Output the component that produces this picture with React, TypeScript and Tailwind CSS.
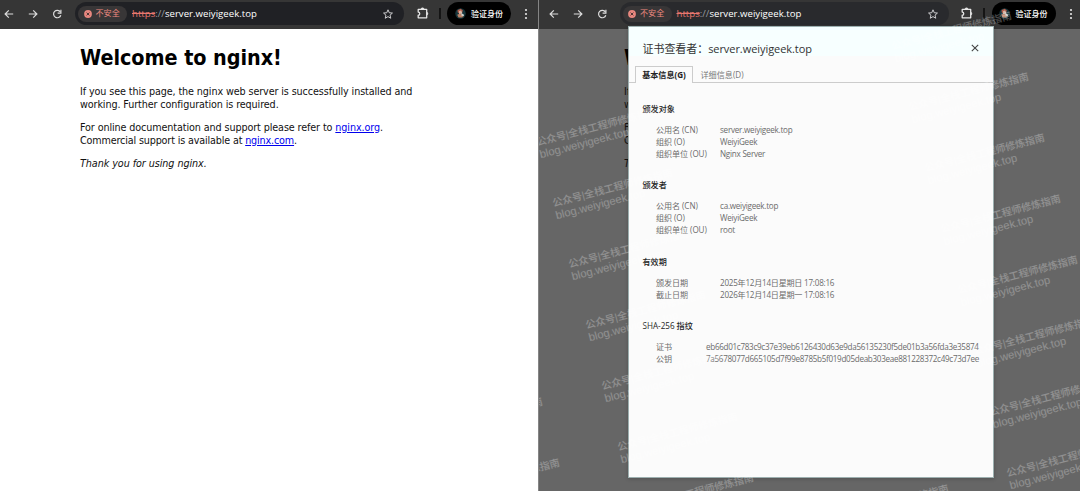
import type { ReactNode } from "react";

function BackArrow() {
  return (
    <svg viewBox="0 0 10 10" className="h-[10px] w-[10px]" fill="none" stroke="#dedede" strokeWidth="1.2">
      <path d="M9.2 5H1.3M4.8 1.3L1.1 5l3.7 3.7" />
    </svg>
  );
}

function ForwardArrow() {
  return (
    <svg viewBox="0 0 10 10" className="h-[10px] w-[10px]" fill="none" stroke="#dedede" strokeWidth="1.2">
      <path d="M.8 5h7.9M5.2 1.3L8.9 5 5.2 8.7" />
    </svg>
  );
}

function Reload() {
  return (
    <svg viewBox="0 0 10 10" className="h-[10px] w-[10px]" fill="none" stroke="#dedede" strokeWidth="1.2">
      <path d="M8.8 6.2A3.7 3.7 0 1 1 8.4 3" />
      <path d="M8.9.8v3.3H5.6" />
    </svg>
  );
}

function Star() {
  return (
    <svg viewBox="0 0 24 24" className="h-[12px] w-[12px]" fill="none" stroke="#d4d4d6" strokeWidth="1.9" strokeLinejoin="miter">
      <path d="M12 3.6l2.5 5.9 6.4.6-4.8 4.2 1.4 6.2L12 17.2l-5.5 3.3 1.4-6.2-4.8-4.2 6.4-.6z" />
    </svg>
  );
}

function Puzzle() {
  return (
    <svg viewBox="0 0 12 12" className="h-[12px] w-[12px]" fill="none" stroke="#e6e6e6" strokeWidth="1.3" strokeLinejoin="round">
      <path d="M1.2 2.4h8.5v8.4H1.2V8.2a1.5 1.5 0 0 0 0-3.1z" />
      <path d="M4 2.1a1.5 1.3 0 0 1 3 0zM10 5.3a1.2 1.4 0 0 1 0 2.7z" fill="#e6e6e6" strokeWidth=".5" />
    </svg>
  );
}

function Avatar() {
  return (
    <svg viewBox="0 0 11 11" className="h-[11px] w-[11px] shrink-0">
      <circle cx="5.5" cy="5.5" r="5.2" fill="#17363c" />
      <path d="M2.6 1.9l3.2-1.1 2 1.6-.8 2.5-3 .3-1.4-1z" fill="#b5604f" />
      <path d="M4 3.2l2-.6 1.2 1.9-1.1 2.2-2-.4z" fill="#d8b8a6" />
      <path d="M2.2 6.8l3-1.4 3.6 1.8-1.5 2.2-3.8.2z" fill="#bb8066" />
      <path d="M6.2 5l2.6 1.5.1 1.7-2.4-.4z" fill="#c9cfcb" />
    </svg>
  );
}

function Toolbar({ dimmed }: { dimmed?: boolean }) {
  return (
    <div className="flex h-[29px] w-[538px] shrink-0 items-center bg-[#363636] pb-[2px] font-['Open_Sans','Noto_Sans_CJK_SC',sans-serif]">
      <div className="flex w-[75px] shrink-0 items-center gap-[14px] pl-[4px]">
        <BackArrow />
        <ForwardArrow />
        <Reload />
      </div>
      <div className={`flex h-[23px] w-[329px] shrink-0 items-center rounded-full pl-[3px] pr-[10px] ${dimmed ? "bg-[#292a2d]" : "bg-[#202125]"}`}>
        <div className="flex h-[16px] w-[49px] shrink-0 items-center gap-[4px] rounded-full bg-[#383637] pl-[5.5px]">
          <svg viewBox="0 0 8 8" className="h-[8px] w-[8px] shrink-0">
            <circle cx="4" cy="4" r="3.9" fill="#e8877f" />
            <path d="M2.6 2.6l2.8 2.8M5.4 2.6L2.6 5.4" stroke="#402f2f" strokeWidth=".9" />
          </svg>
          <span className="whitespace-nowrap text-[8.1px] leading-none text-[#ee8a80]">不安全</span>
        </div>
        <div className="ml-[5px] flex-1 whitespace-nowrap text-[9.6px] leading-none tracking-[0.02px] text-white">
          <span className="text-[#e8776f] line-through">https</span>
          <span className="text-[#9a9b9e]">://</span>
          <span>server.weiyigeek.top</span>
        </div>
        <Star />
      </div>
      <div className="ml-[12.5px] shrink-0 pb-[2px]"><Puzzle /></div>
      <div className="ml-[10px] h-[11px] w-[2px] shrink-0 bg-[#151515]" />
      <div className="ml-[6.5px] flex h-[23px] w-[64px] shrink-0 items-center gap-[5.5px] rounded-full bg-black pl-[7.5px]">
        <Avatar />
        <span className="whitespace-nowrap text-[8px] font-medium leading-none text-white">验证身份</span>
      </div>
      <svg viewBox="0 0 4 12" className="ml-[13px] h-[12px] w-[4px] shrink-0" fill="#e4e4e4">
        <circle cx="2" cy="2" r="1.1" />
        <circle cx="2" cy="6" r="1.1" />
        <circle cx="2" cy="10" r="1.1" />
      </svg>
    </div>
  );
}

function NginxPage() {
  return (
    <div className="flex w-[440px] flex-col gap-[10px] whitespace-nowrap pl-[80px] pt-[16px] font-['DejaVu_Sans_Condensed','DejaVu_Sans',sans-serif] text-[10.7px] leading-[13px] tracking-[-0.1px] text-[#111] [font-stretch:condensed]">
      <h1 className="mb-[4px] text-[21.4px] font-bold leading-[26px] tracking-[-0.05px] text-black">Welcome to nginx!</h1>
      <p>
        If you see this page, the nginx web server is successfully installed and
        <br />
        working. Further configuration is required.
      </p>
      <p>
        For online documentation and support please refer to <a className="text-[#0000ee] underline">nginx.org</a>.
        <br />
        <span className="tracking-[-0.15px]">Commercial support is available at <a className="text-[#0000ee] underline">nginx.com</a>.</span>
      </p>
      <p className="tracking-[-0.06px]"><em>Thank you for using nginx.</em></p>
    </div>
  );
}

function Section({ title, className, children }: { title: string; className?: string; children: ReactNode }) {
  return (
    <section className={className}>
      <h3 className="h-[12px] text-[8.1px] font-medium leading-[12px] text-[#222]">{title}</h3>
      <div className="mt-[9px] pl-[13.5px]">{children}</div>
    </section>
  );
}

function Row({ label, value, hash }: { label: string; value: string; hash?: boolean }) {
  return (
    <div className="flex h-[12px] items-center whitespace-nowrap text-[8.1px] leading-[12px] text-[#6b6b6b]">
      <span className={`shrink-0 tracking-[-0.08px] ${hash ? "w-[50px]" : "w-[64px]"}`}>{label}</span>
      <span className={hash ? "tracking-[-0.3px]" : "tracking-[-0.24px]"}>{value}</span>
    </div>
  );
}

function CertificateDialog() {
  return (
    <div className="flex h-[452px] w-[366px] flex-col border border-[#9db0b0] bg-[#fbfbfb] font-['Open_Sans','Noto_Sans_CJK_SC',sans-serif] shadow-[0_1px_4px_rgba(0,0,0,0.2)]">
      <div className="flex h-[29px] shrink-0 items-end justify-between bg-[#f7ffff] pl-[13.5px] pr-[14.5px]">
        <h2 className="whitespace-nowrap text-[11px] leading-[15px] tracking-[-0.06px] text-[#333]">证书查看者：server.weiyigeek.top</h2>
        <svg viewBox="0 0 8 8" className="mb-[4px] h-[8px] w-[8px]" stroke="#444" strokeWidth="1.1">
          <path d="M.8.8l6.4 6.4M7.2.8L.8 7.2" />
        </svg>
      </div>
      <div className="mt-[10px] flex h-[17px] shrink-0 text-[8.1px] leading-[16px]">
        <div className="w-[6px] border-b border-[#ccc]" />
        <div className="w-[58px] whitespace-nowrap border border-b-0 border-[#ccc] text-center font-bold text-[#222]">基本信息(G)</div>
        <div className="flex-1 border-b border-[#ccc] pl-[7.5px] pt-px text-[#777]">详细信息(D)</div>
      </div>
      <div className="pl-[13.5px] pt-[20px]">
        <Section title="颁发对象">
          <Row label="公用名 (CN)" value="server.weiyigeek.top" />
          <Row label="组织 (O)" value="WeiyiGeek" />
          <Row label="组织单位 (OU)" value="Nginx Server" />
        </Section>
        <Section title="颁发者" className="mt-[19px]">
          <Row label="公用名 (CN)" value="ca.weiyigeek.top" />
          <Row label="组织 (O)" value="WeiyiGeek" />
          <Row label="组织单位 (OU)" value="root" />
        </Section>
        <Section title="有效期" className="mt-[19.5px]">
          <Row label="颁发日期" value="2025年12月14日星期日 17:08:16" />
          <Row label="截止日期" value="2026年12月14日星期一 17:08:16" />
        </Section>
        <Section title="SHA-256 指纹" className="mt-[19.5px]">
          <Row hash label="证书" value="eb66d01c783c9c37e39eb6126430d63e9da56135230f5de01b3a56fda3e35874" />
          <Row hash label="公钥" value="7a5678077d665105d7f99e8785b5f019d05deab303eae881228372c49c73d7ee" />
        </Section>
      </div>
    </div>
  );
}

// Each mark is the left end of a tilted two-line label, relative to the right-hand window.
const marks = [
  [-2, 143], [14, 204], [30, 265], [47, 326], [63, 387], [79, 448], [95, 509],
  [-116, 433], [-99, 494], [290, 520],
  [353, 47], [370, 108], [386, 169], [402, 230], [419, 291], [435, 352], [451, 413], [468, 474],
];

function Watermarks() {
  return (
    <div className="pointer-events-none absolute inset-0 overflow-hidden">
      {marks.map(([x, y]) => (
        <div
          key={`${x}-${y}`}
          className="absolute w-max origin-top-left -rotate-[14.5deg] whitespace-nowrap font-['Liberation_Sans','Noto_Sans_CJK_SC',sans-serif] text-white/28"
          style={{ left: x - 2, top: y - 7 }}
        >
          <div className="text-[10.1px] font-medium leading-[13px]">公众号|全栈工程师修炼指南</div>
          <div className="text-[11.2px] leading-[13px]">blog.weiyigeek.top</div>
        </div>
      ))}
    </div>
  );
}

export default function App() {
  return (
    <div className="flex h-[491px] w-[1080px] overflow-hidden bg-white">
      <div className="w-[538px] shrink-0 bg-white">
        <Toolbar />
        <NginxPage />
      </div>
      <div className="relative h-full w-[542px] shrink-0 overflow-hidden border-l border-[#858585] bg-[#666]">
        <div className="h-[29px] bg-[#363636] pl-[5.5px]">
          <Toolbar dimmed />
        </div>
        <div className="pl-[5px]">
          <NginxPage />
        </div>
        <div className="absolute left-[89px] top-[26px]">
          <CertificateDialog />
        </div>
        <Watermarks />
      </div>
    </div>
  );
}
